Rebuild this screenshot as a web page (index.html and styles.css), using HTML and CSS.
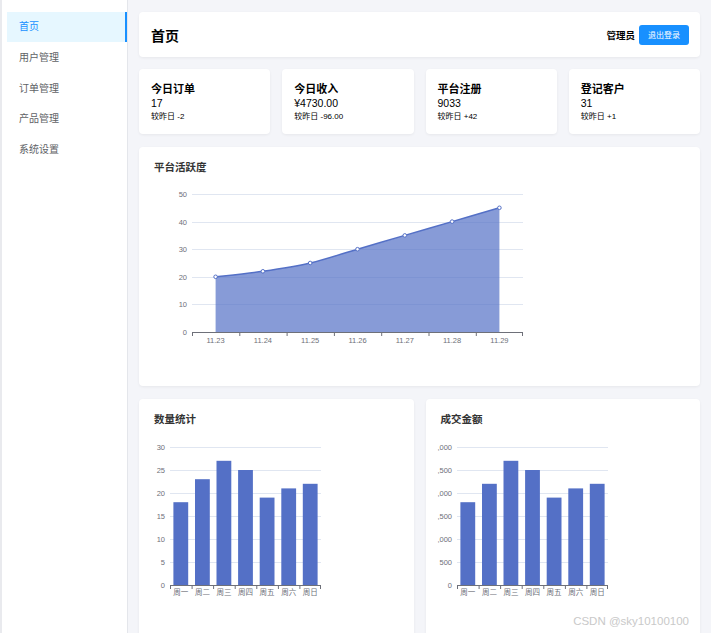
FILE: index.html
```html
<!DOCTYPE html>
<html lang="zh-CN">
<head>
<meta charset="utf-8">
<title>首页</title>
<link rel="stylesheet" href="styles.css">
</head>
<body>
<div class="app">
  <aside class="sidebar">
    <ul class="menu">
      <li class="menu-item active">首页</li>
      <li class="menu-item">用户管理</li>
      <li class="menu-item">订单管理</li>
      <li class="menu-item">产品管理</li>
      <li class="menu-item">系统设置</li>
    </ul>
  </aside>
  <main class="main">
    <header class="card header">
      <h1 class="page-title">首页</h1>
      <div class="user">
        <span class="user-name">管理员</span>
        <button class="btn-logout">退出登录</button>
      </div>
    </header>

    <section class="stats">
      <div class="card stat">
        <div class="stat-title">今日订单</div>
        <div class="stat-value">17</div>
        <div class="stat-sub">较昨日 -2</div>
      </div>
      <div class="card stat">
        <div class="stat-title">今日收入</div>
        <div class="stat-value">¥4730.00</div>
        <div class="stat-sub">较昨日 -96.00</div>
      </div>
      <div class="card stat">
        <div class="stat-title">平台注册</div>
        <div class="stat-value">9033</div>
        <div class="stat-sub">较昨日 +42</div>
      </div>
      <div class="card stat">
        <div class="stat-title">登记客户</div>
        <div class="stat-value">31</div>
        <div class="stat-sub">较昨日 +1</div>
      </div>
    </section>

    <section class="card chart-card line-card">
      <div class="chart-title">平台活跃度</div>
      <svg class="line-chart" width="400" height="196" viewBox="0 0 400 196">
        <g class="grid">
          <line x1="38" y1="19.5" x2="369" y2="19.5"/>
          <line x1="38" y1="47.5" x2="369" y2="47.5"/>
          <line x1="38" y1="74.5" x2="369" y2="74.5"/>
          <line x1="38" y1="102.5" x2="369" y2="102.5"/>
          <line x1="38" y1="129.5" x2="369" y2="129.5"/>
        </g>
        <g class="ylabels">
          <text x="33" y="22">50</text>
          <text x="33" y="50">40</text>
          <text x="33" y="77">30</text>
          <text x="33" y="105">20</text>
          <text x="33" y="132">10</text>
          <text x="33" y="160">0</text>
        </g>
        <path class="area" d="M61.6,101.8 C69.5,100.9 93.1,98.6 108.9,96.3 C124.7,94.0 140.4,91.7 156.2,88.0 C172.0,84.3 187.7,78.8 203.5,74.2 C219.3,69.6 235.0,65.0 250.8,60.4 C266.6,55.8 282.3,51.2 298.1,46.6 C313.9,42.0 337.5,35.1 345.4,32.8 L345.4,157 L61.6,157 Z"/>
        <path class="line" d="M61.6,101.8 C69.5,100.9 93.1,98.6 108.9,96.3 C124.7,94.0 140.4,91.7 156.2,88.0 C172.0,84.3 187.7,78.8 203.5,74.2 C219.3,69.6 235.0,65.0 250.8,60.4 C266.6,55.8 282.3,51.2 298.1,46.6 C313.9,42.0 337.5,35.1 345.4,32.8"/>
        <g class="dots">
          <circle cx="61.6" cy="101.8" r="1.8"/>
          <circle cx="108.9" cy="96.3" r="1.8"/>
          <circle cx="156.2" cy="88.0" r="1.8"/>
          <circle cx="203.5" cy="74.2" r="1.8"/>
          <circle cx="250.8" cy="60.4" r="1.8"/>
          <circle cx="298.1" cy="46.6" r="1.8"/>
          <circle cx="345.4" cy="32.8" r="1.8"/>
        </g>
        <g class="axis">
          <line x1="38" y1="157.5" x2="369" y2="157.5"/>
          <line x1="38.5" y1="157" x2="38.5" y2="161"/>
          <line x1="85.8" y1="157" x2="85.8" y2="161"/>
          <line x1="133.1" y1="157" x2="133.1" y2="161"/>
          <line x1="180.4" y1="157" x2="180.4" y2="161"/>
          <line x1="227.7" y1="157" x2="227.7" y2="161"/>
          <line x1="275" y1="157" x2="275" y2="161"/>
          <line x1="322.3" y1="157" x2="322.3" y2="161"/>
          <line x1="368.5" y1="157" x2="368.5" y2="161"/>
        </g>
        <g class="xlabels">
          <text x="61.6" y="168">11.23</text>
          <text x="108.9" y="168">11.24</text>
          <text x="156.2" y="168">11.25</text>
          <text x="203.5" y="168">11.26</text>
          <text x="250.8" y="168">11.27</text>
          <text x="298.1" y="168">11.28</text>
          <text x="345.4" y="168">11.29</text>
        </g>
      </svg>
    </section>

    <section class="bottom">
      <div class="card chart-card bar-card">
        <div class="chart-title">数量统计</div>
        <svg class="bar-chart" width="240" height="180" viewBox="0 0 240 180">
          <g class="grid">
            <line x1="20" y1="20.5" x2="171" y2="20.5"/>
            <line x1="20" y1="43.5" x2="171" y2="43.5"/>
            <line x1="20" y1="66.5" x2="171" y2="66.5"/>
            <line x1="20" y1="89.5" x2="171" y2="89.5"/>
            <line x1="20" y1="112.5" x2="171" y2="112.5"/>
            <line x1="20" y1="135.5" x2="171" y2="135.5"/>
          </g>
          <g class="ylabels">
            <text x="15" y="23">30</text>
            <text x="15" y="46">25</text>
            <text x="15" y="69">20</text>
            <text x="15" y="92">15</text>
            <text x="15" y="115">10</text>
            <text x="15" y="138">5</text>
            <text x="15" y="161">0</text>
          </g>
          <g class="bars">
            <rect x="23.4" y="75.2" width="14.8" height="82.8"/>
            <rect x="45" y="52.2" width="14.8" height="105.8"/>
            <rect x="66.5" y="33.8" width="14.8" height="124.2"/>
            <rect x="88.1" y="43" width="14.8" height="115"/>
            <rect x="109.7" y="70.6" width="14.8" height="87.4"/>
            <rect x="131.3" y="61.4" width="14.8" height="96.6"/>
            <rect x="152.8" y="56.8" width="14.8" height="101.2"/>
          </g>
          <g class="axis">
            <line x1="20" y1="158.5" x2="171" y2="158.5"/>
            <line x1="20.5" y1="158" x2="20.5" y2="162"/>
            <line x1="42.1" y1="158" x2="42.1" y2="162"/>
            <line x1="63.6" y1="158" x2="63.6" y2="162"/>
            <line x1="85.2" y1="158" x2="85.2" y2="162"/>
            <line x1="106.8" y1="158" x2="106.8" y2="162"/>
            <line x1="128.4" y1="158" x2="128.4" y2="162"/>
            <line x1="149.9" y1="158" x2="149.9" y2="162"/>
            <line x1="170.5" y1="158" x2="170.5" y2="162"/>
          </g>
          <g class="xlabels">
            <text x="30.8" y="168">周一</text>
            <text x="52.4" y="168">周二</text>
            <text x="73.9" y="168">周三</text>
            <text x="95.5" y="168">周四</text>
            <text x="117.1" y="168">周五</text>
            <text x="138.7" y="168">周六</text>
            <text x="160.2" y="168">周日</text>
          </g>
        </svg>
      </div>
      <div class="card chart-card bar-card">
        <div class="chart-title">成交金额</div>
        <svg class="bar-chart" width="240" height="180" viewBox="0 0 240 180">
          <g class="grid">
            <line x1="20" y1="20.5" x2="171" y2="20.5"/>
            <line x1="20" y1="43.5" x2="171" y2="43.5"/>
            <line x1="20" y1="66.5" x2="171" y2="66.5"/>
            <line x1="20" y1="89.5" x2="171" y2="89.5"/>
            <line x1="20" y1="112.5" x2="171" y2="112.5"/>
            <line x1="20" y1="135.5" x2="171" y2="135.5"/>
          </g>
          <g class="ylabels">
            <text x="15" y="23">,000</text>
            <text x="15" y="46">,500</text>
            <text x="15" y="69">,000</text>
            <text x="15" y="92">,500</text>
            <text x="15" y="115">,000</text>
            <text x="15" y="138">500</text>
            <text x="15" y="161">0</text>
          </g>
          <g class="bars">
            <rect x="23.4" y="75.2" width="14.8" height="82.8"/>
            <rect x="45" y="56.8" width="14.8" height="101.2"/>
            <rect x="66.5" y="33.8" width="14.8" height="124.2"/>
            <rect x="88.1" y="43" width="14.8" height="115"/>
            <rect x="109.7" y="70.6" width="14.8" height="87.4"/>
            <rect x="131.3" y="61.4" width="14.8" height="96.6"/>
            <rect x="152.8" y="56.8" width="14.8" height="101.2"/>
          </g>
          <g class="axis">
            <line x1="20" y1="158.5" x2="171" y2="158.5"/>
            <line x1="20.5" y1="158" x2="20.5" y2="162"/>
            <line x1="42.1" y1="158" x2="42.1" y2="162"/>
            <line x1="63.6" y1="158" x2="63.6" y2="162"/>
            <line x1="85.2" y1="158" x2="85.2" y2="162"/>
            <line x1="106.8" y1="158" x2="106.8" y2="162"/>
            <line x1="128.4" y1="158" x2="128.4" y2="162"/>
            <line x1="149.9" y1="158" x2="149.9" y2="162"/>
            <line x1="170.5" y1="158" x2="170.5" y2="162"/>
          </g>
          <g class="xlabels">
            <text x="30.8" y="168">周一</text>
            <text x="52.4" y="168">周二</text>
            <text x="73.9" y="168">周三</text>
            <text x="95.5" y="168">周四</text>
            <text x="117.1" y="168">周五</text>
            <text x="138.7" y="168">周六</text>
            <text x="160.2" y="168">周日</text>
          </g>
        </svg>
      </div>
    </section>
    <div class="watermark">CSDN @sky10100100</div>
  </main>
</div>
</body>
</html>
```

FILE: styles.css
```css
* { box-sizing: border-box; }
html, body {
  margin: 0;
  padding: 0;
  height: 100%;
  overflow: hidden;
}
body {
  font-family: "Liberation Sans", "Noto Sans CJK SC", sans-serif;
  color: #000;
  background: #f4f5f9;
}
.app {
  display: flex;
  height: 633px;
}
.sidebar {
  width: 128px;
  flex: none;
  background: #fff;
  border-left: 2px solid #e9eaee;
  border-right: 1px solid #e4e6eb;
  padding: 12px 0 0 5px;
}
.menu {
  list-style: none;
  margin: 0;
  padding: 0;
}
.menu-item {
  height: 30.7px;
  line-height: 31px;
  padding-left: 12px;
  font-size: 10px;
  color: #606266;
}
.menu-item.active {
  background: #e6f7ff;
  color: #1890ff;
  border-right: 2px solid #1890ff;
  height: 30px;
  line-height: 30px;
}
.main {
  position: relative;
  flex: 1;
  padding: 12px 11px 0 11px;
  overflow: hidden;
}
.card {
  background: #fff;
  border-radius: 4px;
  box-shadow: 0 1px 3px rgba(0, 0, 0, 0.06);
}
.header {
  height: 45px;
  display: flex;
  align-items: center;
  justify-content: space-between;
  padding: 0 11px 0 12px;
  margin-bottom: 12px;
}
.page-title {
  margin: 0;
  font-size: 14px;
  font-weight: bold;
}
.user {
  display: flex;
  align-items: center;
  gap: 4px;
}
.user-name {
  font-size: 9.5px;
  font-weight: bold;
}
.btn-logout {
  width: 50px;
  height: 20px;
  border: 0;
  border-radius: 3px;
  background: #1890ff;
  color: #fff;
  font-family: inherit;
  font-size: 8px;
  padding: 0;
}
.stats {
  display: grid;
  grid-template-columns: repeat(4, 1fr);
  gap: 12px;
  margin-bottom: 13px;
}
.stat {
  height: 65px;
  padding: 13px 12px 0 12px;
}
.stat-title {
  font-size: 11px;
  font-weight: bold;
  line-height: 14px;
}
.stat-value {
  font-size: 10.5px;
  line-height: 14px;
}
.stat-sub {
  font-size: 8px;
  line-height: 14px;
}
.chart-card {
  padding: 13px 0 0 15px;
}
.line-card {
  height: 239px;
  margin-bottom: 13px;
}
.chart-title {
  font-size: 10.5px;
  font-weight: bold;
  color: #333;
  line-height: 15px;
}
.line-chart, .bar-chart {
  display: block;
  font-family: "Liberation Sans", "Noto Sans CJK SC", sans-serif;
}
.bottom {
  display: grid;
  grid-template-columns: 1fr 1fr;
  gap: 12px;
}
.bar-card {
  height: 260px;
  padding-left: 11px;
  overflow: hidden;
}
.bar-card .chart-title { padding-left: 4px; }
.bar-chart { overflow: hidden; }
.grid line {
  stroke: #e0e6f1;
  stroke-width: 1;
}
.axis line {
  stroke: #6e7079;
  stroke-width: 1;
}
.ylabels text {
  font-size: 7.5px;
  fill: #6e7079;
  text-anchor: end;
}
.xlabels text {
  font-size: 7.5px;
  fill: #6e7079;
  text-anchor: middle;
}
.area {
  fill: #5470c6;
  fill-opacity: 0.7;
}
.line {
  fill: none;
  stroke: #5470c6;
  stroke-width: 1.5;
}
.dots circle {
  fill: #fff;
  stroke: #5470c6;
  stroke-width: 1;
}
.bars rect {
  fill: #5470c6;
}
.watermark {
  position: absolute;
  right: 22px;
  bottom: 6px;
  font-size: 11.5px;
  color: #c9c9c9;
  font-family: "Liberation Sans", sans-serif;
}
```
